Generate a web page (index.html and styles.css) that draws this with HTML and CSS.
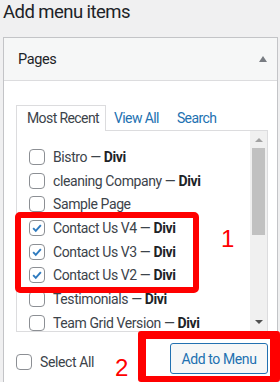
FILE: index.html
```html
<!DOCTYPE html>
<html>
<head>
	<title>Add menu items</title>
	<link rel="stylesheet" href="styles.css">
</head>
<body>
	<h2 class="title">Add menu items</h2>
	<div class="box">
		<div class="box-head">
			<span>Pages</span>
			<span class="toggle"></span>
		</div>
		<div class="box-body">
			<ul class="tabs">
				<li class="tab active">Most Recent</li>
				<li class="tab">View All</li>
				<li class="tab">Search</li>
			</ul>
			<div class="panel">
				<ul class="list">
					<li><span class="check"></span><span>Bistro — <b>Divi</b></span></li>
					<li><span class="check"></span><span>cleaning Company — <b>Divi</b></span></li>
					<li><span class="check"></span><span>Sample Page</span></li>
					<li><span class="check on"><svg viewBox="0 0 16 16"><path d="M3.6 8.2l3 3.1 5.8-6.6" /></svg></span><span>Contact Us V4 — <b>Divi</b></span></li>
					<li><span class="check on"><svg viewBox="0 0 16 16"><path d="M3.6 8.2l3 3.1 5.8-6.6" /></svg></span><span>Contact Us V3 — <b>Divi</b></span></li>
					<li><span class="check on"><svg viewBox="0 0 16 16"><path d="M3.6 8.2l3 3.1 5.8-6.6" /></svg></span><span>Contact Us V2 — <b>Divi</b></span></li>
					<li><span class="check"></span><span>Testimonials — <b>Divi</b></span></li>
					<li><span class="check"></span><span>Team Grid Version — <b>Divi</b></span></li>
				</ul>
				<div class="scrollbar">
					<span class="arrow up"></span>
					<span class="thumb"></span>
					<span class="arrow down"></span>
				</div>
			</div>
			<div class="actions">
				<label class="select-all"><span class="check"></span><span>Select All</span></label>
				<button class="add-btn">Add to Menu</button>
			</div>
		</div>
	</div>

	<!-- annotations -->
	<div class="mark mark-one"></div>
	<span class="num num-one">1</span>
	<div class="mark mark-two"></div>
	<span class="num num-two">2</span>
</body>
</html>
```

FILE: styles.css
```css
body {
	margin: 0;
	background-color: #f0f0f1;
	font-family: Roboto, "Noto Sans", sans-serif;
	color: #3c434a;
	letter-spacing: -0.4px;
	overflow: hidden;
	height: 382px;
	position: relative;
}

.title {
	margin: 0;
	padding: 0 0 0 3px;
	height: 37px;
	font-size: 18.5px;
	font-weight: normal;
	letter-spacing: -0.55px;
	line-height: 24px;
	color: #1d2327;
}

.box {
	margin: 0 2px 0 3px;
	background-color: #fff;
	border: 1px solid #c3c4c7;
	border-bottom: none;
	height: 344px;
}

.box-head {
	height: 42px;
	background-color: #f6f7f7;
	border-bottom: 1px solid #dcdcde;
	display: flex;
	align-items: center;
	justify-content: space-between;
	padding: 0 10px 0 14px;
	font-size: 14.5px;
	color: #1d2327;
}

.toggle {
	width: 0;
	height: 0;
	border-left: 4px solid transparent;
	border-right: 4px solid transparent;
	border-bottom: 6px solid #787c82;
}

.box-body {
	padding: 24px 9px 0 12px;
}

.tabs {
	list-style: none;
	margin: 0;
	padding: 0;
	display: flex;
	height: 25px;
	font-size: 14px;
	letter-spacing: -0.6px;
}

.tab {
	padding: 0 9px 0 10px;
	line-height: 24px;
	color: #2271b1;
	border: 1px solid transparent;
	border-bottom: none;
	white-space: nowrap;
}

.tab.active {
	width: 69px;
	color: #3c434a;
	border-color: #dcdcde;
	background-color: #fff;
	height: 25px;
	position: relative;
	z-index: 1;
}

.tab + .tab {
	padding: 0 9px 0 7px;
}

.panel {
	display: flex;
	height: 200px;
	border: 1px solid #dcdcde;
}

.list {
	list-style: none;
	margin: 0;
	padding: 14px 0 0 12px;
	flex: 1;
	overflow: hidden;
	font-size: 14px;
}

.list li {
	height: 23.7px;
	display: flex;
	align-items: center;
	white-space: nowrap;
}

.list b {
	font-weight: bold;
	color: #1d2327;
}

.check {
	width: 14px;
	height: 14px;
	border: 1px solid #8c8f94;
	border-radius: 4px;
	background-color: #fff;
	margin-right: 8px;
	flex-shrink: 0;
	display: inline-flex;
}

.check svg {
	width: 14px;
	height: 14px;
	fill: none;
	stroke: #2f7bbf;
	stroke-width: 2.2;
}

.scrollbar {
	width: 17px;
	background-color: #f0f0f0;
	display: flex;
	flex-direction: column;
	align-items: center;
}

.arrow {
	width: 0;
	height: 0;
	border-left: 4px solid transparent;
	border-right: 4px solid transparent;
}

.arrow.up {
	border-bottom: 4px solid #a3a3a3;
	margin: 7px 0 6px;
}

.arrow.down {
	border-top: 4px solid #505050;
	margin: auto 0 7px;
}

.thumb {
	width: 13px;
	height: 87px;
	background-color: #c1c1c1;
}

.actions {
	display: flex;
	align-items: center;
	justify-content: space-between;
	padding: 11px 0 0 0;
}

.select-all {
	display: flex;
	align-items: center;
	font-size: 14px;
	margin-top: 6px;
}

.add-btn {
	font-family: inherit;
	font-size: 14px;
	letter-spacing: -0.4px;
	color: #2271b1;
	background-color: #f6f7f7;
	border: 1px solid #2271b1;
	border-radius: 3px;
	width: 98px;
	height: 31px;
	padding: 0;
}

.mark {
	position: absolute;
	border: 6px solid #ff0000;
	border-radius: 5px;
}

.mark-one {
	left: 15px;
	top: 212px;
	width: 172px;
	height: 69px;
}

.mark-two {
	left: 138px;
	top: 331px;
	width: 124px;
	height: 37px;
	border-width: 8px 10px 6px 8px;
	border-radius: 3px;
}

.num {
	position: absolute;
	color: #ff0000;
	font-family: "Liberation Sans", sans-serif;
	font-size: 24px;
	line-height: 24px;
}

.num-one {
	left: 221px;
	top: 227px;
}

.num-two {
	left: 115px;
	top: 356px;
}
```
